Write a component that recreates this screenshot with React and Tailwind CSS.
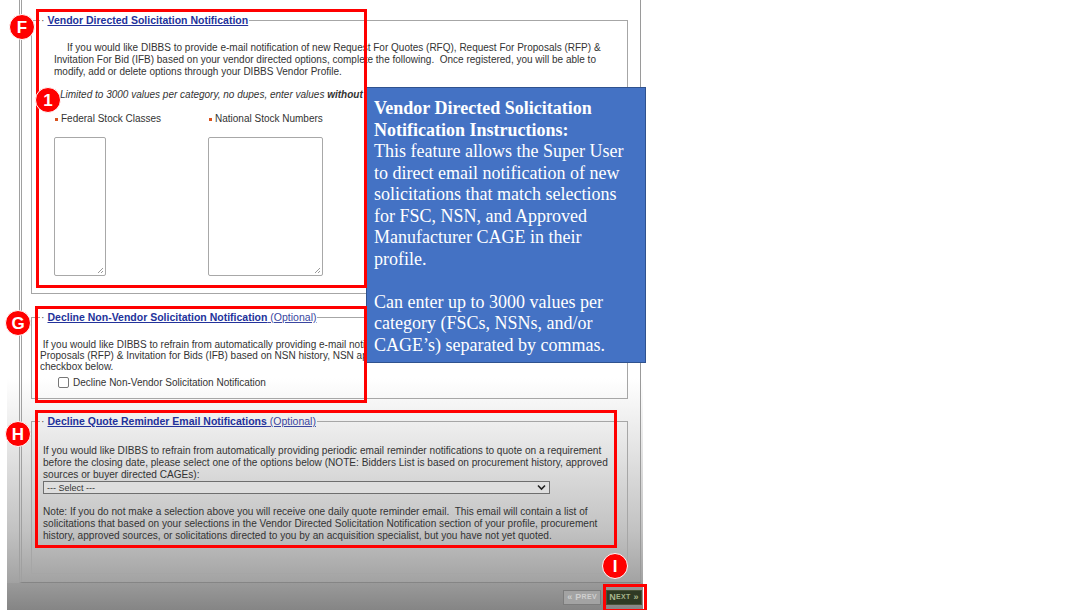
import React from "react";

const Marker = ({ label, className }) => (
  <div
    className={`absolute flex items-center justify-center rounded-full bg-[#ff0000] border-[1.5px] border-white text-white font-bold text-[17px] leading-none font-['Liberation_Sans',Arial,sans-serif] ${className}`}
  >
    {label}
  </div>
);

const RedBox = ({ className }) => (
  <div className={`absolute border-[3px] border-[#ff0000] pointer-events-none ${className}`} />
);

const Legend = ({ title, optional }) => (
  <legend className="ml-[8px] px-[1px] text-[10.5px] leading-[13px] text-[#555]">
    <span className="mr-[3px]">·</span>
    <span className="font-bold underline text-[#23329b]">{title}</span>
    {optional && <span className="underline text-[#3a46a0]"> (Optional)</span>}
  </legend>
);

const Bullet = () => <span className="inline-block w-[3px] h-[3px] bg-[#d9531e] mr-[3px] align-middle" />;

const ResizeArea = ({ className }) => (
  <div className={`relative border border-[#a8a8a8] rounded-[2px] bg-white ${className}`}>
    <svg className="absolute right-[1px] bottom-[1px]" width="7" height="7" viewBox="0 0 7 7">
      <path d="M6 1L1 6M6 4L4 6" stroke="#999" strokeWidth="1" />
    </svg>
  </div>
);

export default function App() {
  return (
    <div className="relative w-[1088px] h-[610px] bg-white overflow-hidden font-['Liberation_Sans',Arial,sans-serif]">
      {/* the web page window */}
      <div className="ml-[7px] w-[636px] h-[610px] flex flex-col bg-[linear-gradient(to_bottom,#ffffff_0%,#ffffff_62%,#e8e8e8_72%,#c2c2c2_87%,#a4a4a4_95%,#8c8c8c_100%)]">
        <div className="ml-[12px] w-[622px] h-[583px] shrink-0 border-l-[3px] border-r border-b border-double border-l-[#a0a0a0] border-r-[#9a9a9a] border-b-[#858585] pl-[9px] pr-[12px] pt-[14px] text-[10px] text-[#333]">
          {/* Vendor Directed Solicitation Notification */}
          <fieldset className="h-[280px] border border-[#a6a6a6]">
            <Legend title="Vendor Directed Solicitation Notification" />
            <div className="mt-[15px] pl-[22px] pr-[18px] leading-[12px]">
              <p className="indent-[13px]">
                If you would like DIBBS to provide e-mail notification of new Request For Quotes (RFQ), Request For Proposals (RFP) &amp;
                <br />
                Invitation For Bid (IFB) based on your vendor directed options, complete the following.&nbsp; Once registered, you will be able to
                <br />
                modify, add or delete options through your DIBBS Vendor Profile.
              </p>
              <p className="mt-[11px] pl-[6px] w-[312px] overflow-hidden italic whitespace-nowrap">
                Limited to 3000 values per category, no dupes, enter values <span className="font-bold">without spaces</span>
              </p>
              <div className="mt-[12px] flex">
                <div className="w-[154px]">
                  <div className="pl-[1px]">
                    <Bullet />
                    Federal Stock Classes
                  </div>
                  <ResizeArea className="mt-[12px] w-[52px] h-[139px]" />
                </div>
                <div className="w-[160px]">
                  <div className="pl-[1px]">
                    <Bullet />
                    National Stock Numbers
                  </div>
                  <ResizeArea className="mt-[12px] w-[115px] h-[139px]" />
                </div>
              </div>
            </div>
          </fieldset>

          {/* Decline Non-Vendor Solicitation Notification */}
          <fieldset className="mt-[17px] h-[88px] border border-[#a6a6a6]">
            <Legend title="Decline Non-Vendor Solicitation Notification" optional />
            <div className="mt-[15px] pl-[8px] leading-[11px] whitespace-nowrap">
              <p className="w-[326px] overflow-hidden">
                &nbsp;If you would like DIBBS to refrain from automatically providing e-mail notification
                <br />
                Proposals (RFP) &amp; Invitation for Bids (IFB) based on NSN history, NSN approved
                <br />
                checkbox below.
              </p>
              <label className="mt-[5px] ml-[18px] flex items-center gap-[4px]">
                <span className="inline-block w-[11px] h-[11px] border border-[#777] rounded-[2px] bg-white" />
                Decline Non-Vendor Solicitation Notification
              </label>
            </div>
          </fieldset>

          {/* Decline Quote Reminder Email Notifications */}
          <fieldset className="mt-[16px] h-[159px] border border-[#a6a6a6]">
            <Legend title="Decline Quote Reminder Email Notifications" optional />
            <div className="mt-[17px] pl-[11px] pr-[6px] text-[10.1px] leading-[12px] whitespace-nowrap">
              <p>
                If you would like DIBBS to refrain from automatically providing periodic email reminder notifications to quote on a requirement
                <br />
                before the closing date, please select one of the options below (NOTE: Bidders List is based on procurement history, approved
                <br />
                sources or buyer directed CAGEs):
              </p>
              <div className="w-[507px] h-[13px] border border-[#6e6e6e] flex items-center justify-between pl-[3px] pr-[3px] text-[9px] bg-[#dedede]">
                <span>--- Select ---</span>
                <svg width="9" height="7" viewBox="0 0 9 7">
                  <path d="M1 1.5L4.5 5L8 1.5" fill="none" stroke="#222" strokeWidth="1.6" />
                </svg>
              </div>
              <p className="mt-[12px]">
                Note: If you do not make a selection above you will receive one daily quote reminder email.&nbsp; This email will contain a list of
                <br />
                solicitations that based on your selections in the Vendor Directed Solicitation Notification section of your profile, procurement
                <br />
                history, approved sources, or solicitations directed to you by an acquisition specialist, but you have not yet quoted.
              </p>
            </div>
          </fieldset>
        </div>

        {/* footer with paging buttons */}
        <div className="flex-1 flex items-start justify-end gap-[5px] pt-[7px] pr-[1px] bg-[linear-gradient(to_bottom,#9a9a9a,#858585)]">
          <div className="w-[38px] h-[15px] flex items-center justify-center bg-[#a3a3a3] border border-[#7c7c7c] text-[9px] tracking-[0.3px] text-[#cfcfcf] font-bold">
            « P<span className="text-[7px]">REV</span>
          </div>
          <div className="w-[36px] h-[15px] flex items-center justify-center bg-[#2f3a24] border border-[#4a5238] text-[9px] tracking-[0.3px] text-[#a7b58c] font-bold">
            N<span className="text-[7px]">EXT</span>&nbsp;»
          </div>
        </div>
      </div>

      {/* instruction callout */}
      <div className="absolute left-[366px] top-[87px] w-[280px] h-[276px] bg-[#4472c4] border border-[#2f528f] pl-[7px] pt-[10px] text-white text-[18px] leading-[21.5px] font-['Liberation_Serif','Times_New_Roman',serif] whitespace-nowrap">
        <div className="font-bold">
          Vendor Directed Solicitation
          <br />
          Notification Instructions:
        </div>
        <div>
          This feature allows the Super User
          <br />
          to direct email notification of new
          <br />
          solicitations that match selections
          <br />
          for FSC, NSN, and Approved
          <br />
          Manufacturer CAGE in their
          <br />
          profile.
        </div>
        <div className="mt-[21.5px]">
          Can enter up to 3000 values per
          <br />
          category (FSCs, NSNs, and/or
          <br />
          CAGE’s) separated by commas.
        </div>
      </div>

      {/* annotations */}
      <RedBox className="left-[36px] top-[9px] w-[331px] h-[279px]" />
      <RedBox className="left-[35px] top-[306px] w-[332px] h-[97px]" />
      <RedBox className="left-[35px] top-[410px] w-[582px] h-[138px]" />
      <RedBox className="left-[603px] top-[584px] w-[44px] h-[28px]" />

      <Marker label="F" className="left-[9px] top-[14px] w-[26px] h-[26px]" />
      <Marker label="1" className="left-[35px] top-[87px] w-[26px] h-[26px]" />
      <Marker label="G" className="left-[5px] top-[310px] w-[26px] h-[26px]" />
      <Marker label="H" className="left-[5px] top-[421px] w-[26px] h-[26px]" />
      <Marker label="I" className="left-[602px] top-[553px] w-[26px] h-[26px]" />
    </div>
  );
}
